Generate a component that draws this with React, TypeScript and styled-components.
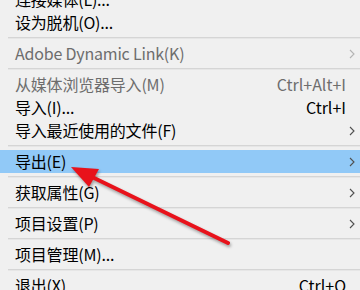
import React from 'react';
import styled, { createGlobalStyle } from 'styled-components';

interface IMenuItem {
  label: string;
  shortcut?: string;
  submenu?: boolean;
  disabled?: boolean;
  active?: boolean;
}

const groups: IMenuItem[][] = [
  [
    { label: '连接媒体(L)...' },
    { label: '设为脱机(O)...' },
  ],
  [{ label: 'Adobe Dynamic Link(K)', submenu: true, disabled: true }],
  [
    { label: '从媒体浏览器导入(M)', shortcut: 'Ctrl+Alt+I', disabled: true },
    { label: '导入(I)...', shortcut: 'Ctrl+I' },
    { label: '导入最近使用的文件(F)', submenu: true },
  ],
  [{ label: '导出(E)', submenu: true, active: true }],
  [{ label: '获取属性(G)', submenu: true }],
  [{ label: '项目设置(P)', submenu: true }],
  [{ label: '项目管理(M)...' }],
  [{ label: '退出(X)', shortcut: 'Ctrl+Q' }],
];

const Chevron = ({ disabled }: { disabled?: boolean }) => (
  <svg width="6" height="10" viewBox="0 0 6 10">
    <path
      d="M1 1 L5 5 L1 9"
      fill="none"
      stroke={disabled ? '#b4b4b4' : '#505050'}
      strokeWidth="1.1"
    />
  </svg>
);

const PointerArrow = () => (
  <ArrowSvg width="360" height="290" viewBox="0 0 360 290">
    <line x1="228" y1="243" x2="90" y2="176" stroke="#e8121b" strokeWidth="4" strokeLinecap="round" />
    <polygon points="71,167 99,169 89,187" fill="#e8121b" />
  </ArrowSvg>
);

export default function App() {
  return (
    <>
      <GlobalStyle />
      <Screen>
        <Menu>
          {groups.map((group, gi) => (
            <React.Fragment key={gi}>
              {gi > 0 && <Separator />}
              <Group>
                {group.map((item) => (
                  <Item key={item.label} $active={item.active} $disabled={item.disabled}>
                    <Label>{item.label}</Label>
                    {item.shortcut && <Shortcut>{item.shortcut}</Shortcut>}
                    <ArrowCell>{item.submenu && <Chevron disabled={item.disabled} />}</ArrowCell>
                  </Item>
                ))}
              </Group>
            </React.Fragment>
          ))}
        </Menu>
        <PointerArrow />
      </Screen>
    </>
  );
}

const GlobalStyle = createGlobalStyle`
  html, body {
    margin: 0;
    padding: 0;
    background: #f0f0f0;
  }
`;

const Screen = styled.div`
  position: relative;
  width: 360px;
  height: 290px;
  overflow: hidden;
  background: #f0f0f0;
  font-family: "Noto Sans CJK SC", "Noto Sans", sans-serif;
  font-size: 16px;
`;

const Menu = styled.div`
  display: flex;
  flex-direction: column;
  margin-top: -16px;
`;

const Group = styled.div`
  display: flex;
  flex-direction: column;
  padding: 4px 0 3px;
`;

const Separator = styled.div`
  height: 1px;
  margin-left: 8px;
  background: #d5d5d5;
  box-shadow: 0 1px 0 #e6e6e6;
`;

const Item = styled.div<{ $active?: boolean; $disabled?: boolean }>`
  display: flex;
  align-items: center;
  height: 23px;
  padding-left: 15px;
  background: ${(p) => (p.$active ? '#91c9f7' : 'transparent')};
  color: ${(p) => (p.$disabled ? '#6d6d6d' : '#000000')};
`;

const Label = styled.span`
  flex: 1;
  white-space: nowrap;
  line-height: 23px;
  letter-spacing: -0.2px;
`;

const Shortcut = styled.span`
  white-space: nowrap;
  line-height: 23px;
`;

const ArrowCell = styled.span`
  display: flex;
  align-items: center;
  flex: 0 0 14px;
  & svg {
    margin-left: 3px;
  }
`;

const ArrowSvg = styled.svg`
  position: absolute;
  left: 0;
  top: 0;
  pointer-events: none;
  filter: drop-shadow(1px 2px 1.5px rgba(0, 0, 0, 0.35));
`;
